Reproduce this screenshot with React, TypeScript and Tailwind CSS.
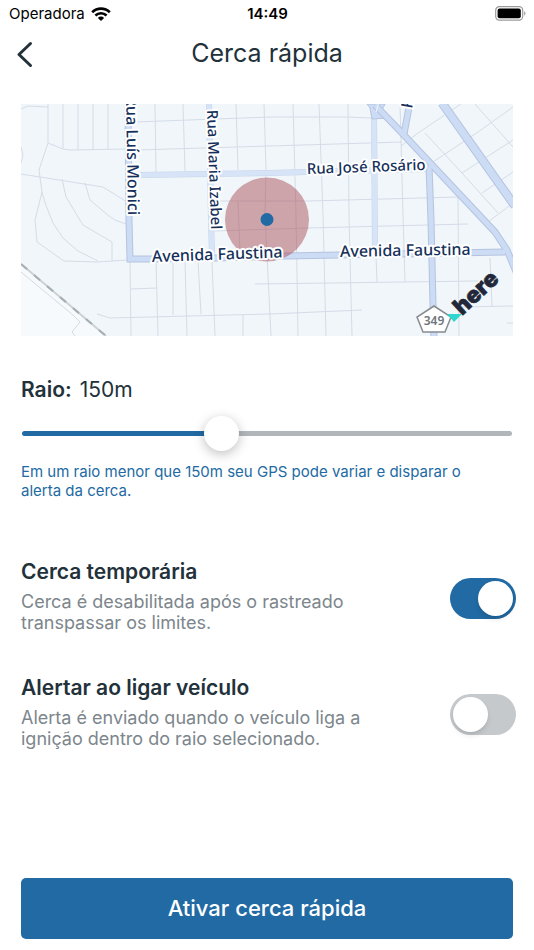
import { useState } from "react";

interface ToggleRowProps {
  id: string;
  title: string;
  description: string;
  checked: boolean;
  onChange: (value: boolean) => void;
}

const MIN_RADIUS = 50;
const MAX_RADIUS = 300;

// side streets, one polyline each
const STREETS = [
  "0,5 7,2 27,3",
  "27,0 27,39 18,66 21,88 14,116 16,138 43,157 76,158 106,156",
  "21,88 24,99 32,119 42,134 57,147 77,157",
  "27,39 42,45 49,46 106,45",
  "42,0 42,44",
  "57,0 57,46",
  "72,0 72,46",
  "87,0 87,46",
  "0,70 82,83 106,98",
  "41,75 45,93 62,121 91,138 91,157",
  "64,79 69,96 88,112 94,116 105,120",
  "0,43 2,51 0,59",
  "114,18 249,13 277,13 326,13 351,14",
  "116,46 249,42 381,38",
  "134,0 135,68",
  "162,0 164,68",
  "215,0 217,66",
  "243,0 245,65 244,111 250,232",
  "272,0 275,111 277,232",
  "298,0 302,111 305,232",
  "327,0 328,111 331,232",
  "379,0 382,111 384,178",
  "355,152 356,178",
  "199,97 287,97 437,93",
  "437,93 438,232",
  "192,127 287,124 447,120",
  "217,98 219,148",
  "234,180 457,177",
  "76,210 89,214 249,210 341,206",
  "109,157 110,232",
  "135,157 137,232",
  "152,157 152,211",
  "164,157 166,232",
  "177,157 180,210",
  "191,157 194,232",
  "222,211 222,232",
  "110,185 136,184",
  "469,154 471,203",
  "439,203 492,202",
  "486,219 492,219",
  "380,42 397,29 440,0",
  "412,58 457,28 492,3",
  "441,69 492,36",
  "461,89 492,68",
  "404,29 441,69 477,109",
  "454,0 492,43",
  "492,99 467,118",
];

const LIGHT_ROADS = ["119,71 249,69 284,68 407,65", "188,0 190,116 191,151", "353,8 354,150"];

const ROADS = [
  "107,-4 108,116 109,155 129,155 196,154 264,152 484,148",
  "354,1 381,29 411,61 459,112 474,128 486,146 496,170",
  "389,-2 383,30",
  "408,62 410,116 412,201 413,236",
];

function StatusBar() {
  return (
    <div className="grid grid-cols-3 items-center h-7 pl-[9px] pr-2 text-black">
      <div className="flex items-center gap-[6px] text-[15px]">
        <span>Operadora</span>
        <svg width="20" height="14" viewBox="0 0 20 14" fill="none" stroke="currentColor" strokeWidth="2.6">
          <path d="M1.2 5.2a12.6 12.6 0 0 1 17.6 0" />
          <path d="M4.4 8.5a8 8 0 0 1 11.2 0" />
          <path d="M10 14 6.9 10.9a4.4 4.4 0 0 1 6.2 0Z" fill="currentColor" stroke="none" />
        </svg>
      </div>
      <span className="text-center text-[15px] font-semibold">14:49</span>
      <svg className="justify-self-end" width="31" height="16" viewBox="0 0 31 16">
        <rect x="0.7" y="0.7" width="27" height="13.4" rx="3.6" fill="none" stroke="#9b9b9b" strokeWidth="1.2" />
        <rect x="2.6" y="2.5" width="23.2" height="9.8" rx="2" fill="#000" />
        <path d="M29.2 5.2c1.7.6 1.7 3.8 0 4.4Z" fill="#9b9b9b" />
      </svg>
    </div>
  );
}

function FenceMap({ radius }: { radius: number }) {
  return (
    <svg
      className="block w-full"
      viewBox="0 0 492 232"
      role="img"
      aria-label="Mapa da cerca"
      fontFamily="'Noto Sans', 'Open Sans', sans-serif"
    >
      <rect width="492" height="232" fill="#f0f6f9" />
      <path d="M0 160 85 232H0Z" fill="#f6fafc" />

      <g fill="none" stroke="#d5dce7" strokeWidth="1">
        {STREETS.map((points) => (
          <polyline key={points} points={points} />
        ))}
      </g>

      {/* railway */}
      <path d="M0 168 52 211 59 218 51 228 54 232" fill="none" stroke="#d8dadd" />
      <path d="M0 160 85 232" stroke="#ccd1d3" strokeWidth="2" />
      <path d="M0 160 85 232" stroke="#a5afb3" strokeWidth="2" strokeDasharray="8 9" />

      <g fill="none" strokeLinejoin="miter">
        {LIGHT_ROADS.map((points) => (
          <polyline key={points} points={points} stroke="#c6d5ea" strokeWidth="6" />
        ))}
        {LIGHT_ROADS.map((points) => (
          <polyline key={points} points={points} stroke="#d7e4f7" strokeWidth="5" />
        ))}
        <path d="M346 0H364L361 6 367 14 351 15 349 4Z" fill="#cddcf5" stroke="#b5c3e0" />
        <path d="M421-1 494 102" stroke="#b5c3e0" strokeWidth="9" />
        <path d="M421-1 494 102" stroke="#cddcf5" strokeWidth="7" />
        {ROADS.map((points) => (
          <polyline key={points} points={points} stroke="#b5c3e0" strokeWidth="7" />
        ))}
        {ROADS.map((points) => (
          <polyline key={points} points={points} stroke="#cddcf5" strokeWidth="5" />
        ))}
        <path d="M358-2 355 8" stroke="#f0f6f9" />
      </g>

      {/* fence area */}
      <circle cx="246" cy="115.5" r={(radius / 150) * 42} fill="#a33844" fillOpacity="0.43" />
      <circle cx="246" cy="115.5" r="6.5" fill="#226aa3" />

      <g fill="#14305a" stroke="#fff" strokeWidth="4" strokeLinejoin="round" paintOrder="stroke" fontSize="15" fontWeight="500">
        <text transform="translate(105 -8) rotate(89)" fontSize="16">Rua Luís Monici</text>
        <text transform="translate(186 6) rotate(88)">Rua Maria Izabel</text>
        <text transform="translate(286 70) rotate(-2)">Rua José Rosário</text>
        <text transform="translate(131 158) rotate(-2)" fontSize="16">Avenida Faustina</text>
        <text transform="translate(319 153) rotate(-1)" fontSize="16">Avenida Faustina</text>
        <text transform="translate(391 5) rotate(-80)" fontSize="16">R</text>
      </g>

      {/* route shield */}
      <path d="M413 202 430 213 424 228H402L396 213Z" fill="#fff" stroke="#878c91" strokeWidth="1.5" />
      <text x="413" y="221" textAnchor="middle" fontSize="12" fontWeight="600" fill="#6f757b">
        349
      </text>

      <text
        transform="translate(441 212) rotate(-43)"
        fontFamily="Inter, sans-serif"
        fontSize="23"
        fontWeight="900"
        fill="#22283a"
        stroke="#22283a"
        strokeWidth="0.6"
      >
        here
      </text>
      <path d="M426 210H441L433 218Z" fill="#2fd8cf" />
    </svg>
  );
}

function ToggleRow({ id, title, description, checked, onChange }: ToggleRowProps) {
  return (
    <div className="flex items-center justify-between gap-4">
      <label htmlFor={id} className="block max-w-[360px]">
        <span className="block text-[21px] leading-[30px] font-semibold text-[#22313a]">{title}</span>
        <span className="block mt-1 text-[18px] leading-[21px] text-[#7c868c]">{description}</span>
      </label>
      <input
        id={id}
        type="checkbox"
        role="switch"
        checked={checked}
        onChange={(e) => onChange(e.target.checked)}
        className="appearance-none shrink-0 flex items-center w-[66px] h-[41px] mt-[6px] px-[3px] rounded-full cursor-pointer bg-[#c5c9cc] checked:bg-[#226aa3] checked:justify-end before:block before:size-[35px] before:rounded-full before:bg-white before:shadow-md"
      />
    </div>
  );
}

export default function App() {
  const [radius, setRadius] = useState(150);
  const [temporary, setTemporary] = useState(true);
  const [ignitionAlert, setIgnitionAlert] = useState(false);

  const percent = ((radius - MIN_RADIUS) / (MAX_RADIUS - MIN_RADIUS)) * 100;

  return (
    <div className="flex flex-col min-h-screen bg-white font-[Inter,sans-serif] text-[#22313a]">
      <StatusBar />

      <header className="grid grid-cols-[40px_1fr_40px] items-center h-[52px] px-[13px]">
        <button type="button" aria-label="Voltar" className="cursor-pointer">
          <svg width="24" height="28" viewBox="0 0 24 28" fill="none" stroke="#22313a" strokeWidth="3" strokeLinecap="round" strokeLinejoin="round">
            <path d="M17.5 3.5 6 14.5 17.5 25.5" />
          </svg>
        </button>
        <h1 className="text-center text-[25px]">Cerca rápida</h1>
      </header>

      <main className="flex flex-col grow px-[21px] pt-6 pb-[11px]">
        <FenceMap radius={radius} />

        <section className="mt-10">
          <label htmlFor="radius" className="flex gap-2 text-[21px] leading-7">
            <span className="font-semibold">Raio:</span>
            <span>{radius}m</span>
          </label>
          <div className="px-px mt-[27px]">
            <input
              id="radius"
              type="range"
              min={MIN_RADIUS}
              max={MAX_RADIUS}
              step={10}
              value={radius}
              onChange={(e) => setRadius(Number(e.target.value))}
              style={{
                backgroundImage: `linear-gradient(to right, #226aa3 ${percent}%, #b0b6ba ${percent}%)`,
              }}
              className="appearance-none block w-full h-[5px] rounded-full cursor-pointer [&::-webkit-slider-thumb]:appearance-none [&::-webkit-slider-thumb]:size-[35px] [&::-webkit-slider-thumb]:rounded-full [&::-webkit-slider-thumb]:bg-white [&::-webkit-slider-thumb]:shadow-[0_3px_12px_rgba(0,0,0,0.25)]"
            />
          </div>
          <p className="max-w-[470px] mt-[26px] text-[15px] leading-[19px] text-[#226aa3]">
            Em um raio menor que 150m seu GPS pode variar e disparar o alerta da cerca.
          </p>
        </section>

        <section className="flex flex-col gap-10 mt-[57px] -mr-[3px]">
          <ToggleRow
            id="temporary"
            title="Cerca temporária"
            description="Cerca é desabilitada após o rastreado transpassar os limites."
            checked={temporary}
            onChange={setTemporary}
          />
          <ToggleRow
            id="ignition"
            title="Alertar ao ligar veículo"
            description="Alerta é enviado quando o veículo liga a ignição dentro do raio selecionado."
            checked={ignitionAlert}
            onChange={setIgnitionAlert}
          />
        </section>

        <button type="button" className="mt-auto h-[61px] rounded-[5px] bg-[#226aa3] text-[22px] font-medium text-white cursor-pointer">
          Ativar cerca rápida
        </button>
      </main>
    </div>
  );
}
